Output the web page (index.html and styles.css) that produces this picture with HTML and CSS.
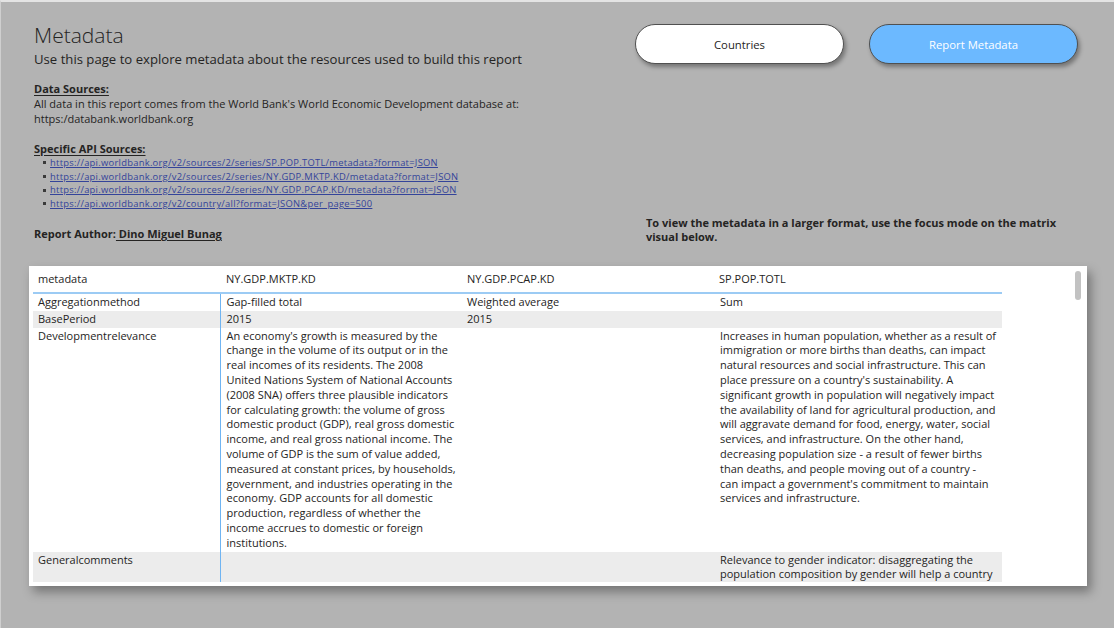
FILE: index.html
```html
<!DOCTYPE html>
<html lang="en">
<head>
<meta charset="utf-8">
<title>Metadata</title>
<link rel="stylesheet" href="styles.css">
</head>
<body>
<div class="page">
  <header class="top">
    <section class="intro">
      <h1 class="title">Metadata</h1>
      <p class="subtitle">Use this page to explore metadata about the resources used to build this report</p>

      <h2 class="label"><span class="ul">Data Sources: </span></h2>
      <p class="body-text">All data in this report comes from the World Bank's World Economic Development database at:<br>https:/databank.worldbank.org</p>

      <h2 class="label api-label"><span class="ul">Specific API Sources: </span></h2>
      <ul class="links">
        <li><a href="#">https://api.worldbank.org/v2/sources/2/series/SP.POP.TOTL/metadata?format=JSON</a></li>
        <li><a href="#">https://api.worldbank.org/v2/sources/2/series/NY.GDP.MKTP.KD/metadata?format=JSON</a></li>
        <li><a href="#">https://api.worldbank.org/v2/sources/2/series/NY.GDP.PCAP.KD/metadata?format=JSON</a></li>
        <li><a href="#">https://api.worldbank.org/v2/country/all?format=JSON&amp;per_page=500</a></li>
      </ul>

      <p class="author">Report Author:<span class="ul"> Dino Miguel Bunag</span></p>
    </section>

    <aside class="side">
      <nav class="nav">
        <button class="btn">Countries</button>
        <button class="btn btn-active">Report Metadata</button>
      </nav>
      <p class="note">To view the metadata in a larger format, use the focus mode on the matrix visual below.</p>
    </aside>
  </header>

  <main class="card">
    <div class="scroll">
      <table class="matrix">
        <colgroup>
          <col class="c1"><col class="c2"><col class="c3"><col class="c4">
        </colgroup>
        <thead>
          <tr>
            <th>metadata</th>
            <th>NY.GDP.MKTP.KD</th>
            <th>NY.GDP.PCAP.KD</th>
            <th class="h4">SP.POP.TOTL</th>
          </tr>
        </thead>
        <tbody>
          <tr>
            <td>Aggregationmethod</td>
            <td class="v">Gap-filled total</td>
            <td>Weighted average</td>
            <td>Sum</td>
          </tr>
          <tr class="band">
            <td>BasePeriod</td>
            <td class="v">2015</td>
            <td>2015</td>
            <td></td>
          </tr>
          <tr>
            <td>Developmentrelevance</td>
            <td class="v">An economy's growth is measured by the change in the volume of its output or in the real incomes of its residents. The 2008 United Nations System of National Accounts (2008 SNA) offers three plausible indicators for calculating growth: the volume of gross domestic product (GDP), real gross domestic income, and real gross national income. The volume of GDP is the sum of value added, measured at constant prices, by households, government, and industries operating in the economy. GDP accounts for all domestic production, regardless of whether the income accrues to domestic or foreign institutions.</td>
            <td></td>
            <td>Increases in human population, whether as a result of immigration or more births than deaths, can impact natural resources and social infrastructure. This can place pressure on a country's sustainability. A significant growth in population will negatively impact the availability of land for agricultural production, and will aggravate demand for food, energy, water, social services, and infrastructure. On the other hand, decreasing population size - a result of fewer births than deaths, and people moving out of a country - can impact a government's commitment to maintain services and infrastructure.</td>
          </tr>
          <tr class="band">
            <td>Generalcomments</td>
            <td class="v"></td>
            <td></td>
            <td>Relevance to gender indicator: disaggregating the population composition by gender will help a country project its demand for social services on a gender basis.</td>
          </tr>
        </tbody>
      </table>
    </div>
    <div class="thumb"></div>
  </main>
</div>
</body>
</html>
```

FILE: styles.css
```css
html, body {
  margin: 0;
  padding: 0;
}

body {
  width: 1114px;
  height: 628px;
  overflow: hidden;
  background: #b3b3b3;
  font-family: "Open Sans", "Noto Sans", sans-serif;
  color: #252423;
}

.page {
  box-sizing: border-box;
  height: 628px;
  border-top: 2px solid #e4e4e4;
  border-left: 1px solid #cfcfcf;
}

.top {
  display: flex;
  justify-content: space-between;
  padding-left: 33px;
  padding-right: 36px;
  height: 264px;
}

.intro {
  padding-top: 19px;
}

.title {
  margin: 0;
  font-size: 21px;
  font-weight: 300;
  line-height: 28px;
  color: #252423;
}

.subtitle {
  margin: 1px 0 0;
  font-size: 13.15px;
  line-height: 18px;
  color: #252423;
}

.label {
  margin: 13px 0 0;
  font-size: 11px;
  font-weight: 700;
  line-height: 15px;
  color: #252423;
}

.api-label {
  margin-top: 15px;
}

.ul {
  text-decoration: underline;
  text-underline-offset: 2px;
}

.body-text {
  margin: 0;
  font-size: 11px;
  line-height: 15px;
  color: #252423;
}

.links {
  margin: 0;
  padding: 0 0 0 9px;
  list-style: none;
}

.links li {
  font-size: 9.4px;
  line-height: 13.7px;
  display: flex;
  align-items: center;
  gap: 4px;
}

.links li::before {
  content: "";
  width: 3px;
  height: 3px;
  background: #3a3a3a;
  flex: none;
}

.links a {
  color: #34449a;
  text-decoration: underline;
  text-underline-offset: 1px;
  letter-spacing: 0.27px;
}

.author {
  margin: 15px 0 0;
  font-size: 11px;
  font-weight: 700;
  line-height: 15px;
}

.side {
  width: 443px;
  display: flex;
  flex-direction: column;
}

.nav {
  display: flex;
  gap: 25px;
  margin-top: 22px;
}

.btn {
  width: 209px;
  height: 40px;
  border: 1px solid #505050;
  border-radius: 20px;
  background: #ffffff;
  color: #252423;
  font-family: "Open Sans", "Noto Sans", sans-serif;
  font-size: 11.3px;
  box-shadow: 2px 3px 4px rgba(0, 0, 0, 0.35);
  cursor: pointer;
}

.btn-active {
  background: #6cb9ff;
  color: #ffffff;
}

.note {
  margin: 152px 0 0 11px;
  font-size: 11px;
  font-weight: 700;
  line-height: 14px;
  color: #252423;
}

.card {
  position: relative;
  box-sizing: border-box;
  width: 1058px;
  height: 320px;
  margin-left: 28px;
  background: #ffffff;
  padding: 0 0 4px 4px;
  box-shadow: 4px 6px 10px rgba(0, 0, 0, 0.35);
}

.scroll {
  height: 316px;
  overflow: hidden;
}

.matrix {
  table-layout: fixed;
  border-collapse: collapse;
  width: 969px;
  font-size: 11px;
  line-height: 14.8px;
  color: #252423;
}

.c1 { width: 187px; }
.c2 { width: 240px; }
.c3 { width: 254px; }
.c4 { width: 288px; }

.matrix th {
  text-align: left;
  font-weight: 400;
  height: 26px;
  padding: 0 5px;
  border-bottom: 2px solid #9ccbf4;
  vertical-align: middle;
}

.matrix th:nth-child(2) { padding-left: 6px; }
.matrix th:nth-child(3) { padding-left: 7px; }

.matrix td {
  padding: 1px 4px 1px 6px;
  vertical-align: top;
}

.matrix td:first-child {
  padding-left: 5px;
}

.matrix td:nth-child(3) {
  padding-left: 7px;
}

.matrix td:nth-child(4) {
  padding-right: 5.25px;
}

.matrix td.v {
  border-left: 1px solid #6fb4f2;
}

.band td {
  background: #ececec;
}

.thumb {
  position: absolute;
  left: 1046px;
  top: 5px;
  width: 6px;
  height: 29px;
  border-radius: 3px;
  background: #c2c2c2;
}
```
